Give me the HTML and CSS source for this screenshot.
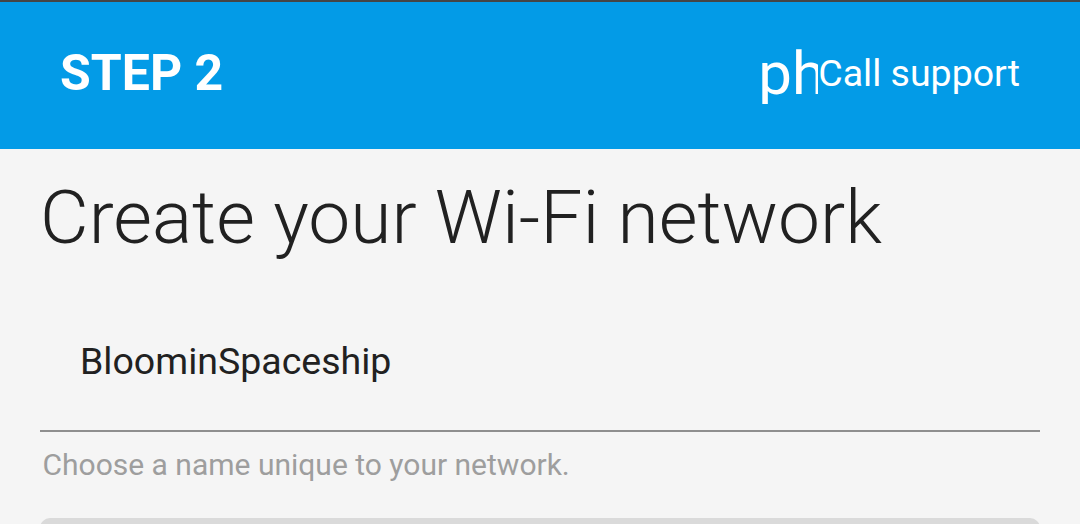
FILE: index.html
```html
<!DOCTYPE html>
<html lang="en">
<head>
<meta charset="utf-8">
<title>Create your Wi-Fi network</title>
<link rel="stylesheet" href="styles.css">
</head>
<body>
<header class="app-bar">
  <div class="step">STEP 2</div>
  <div class="support"><span class="support-icon">phone</span><span class="support-label">Call support</span></div>
</header>
<main class="content">
  <h1 class="title">Create your Wi-Fi network</h1>
  <div class="field">BloominSpaceship</div>
  <p class="hint">Choose a name unique to your network.</p>
  <div class="button"></div>
</main>
</body>
</html>
```

FILE: styles.css
```css
* { box-sizing: border-box; }
body {
  margin: 0;
  height: 524px;
  overflow: hidden;
  background: #f5f5f5;
  color: #212121;
  font-family: Roboto, sans-serif;
}
.app-bar {
  display: flex;
  justify-content: space-between;
  height: 149px;
  padding: 0 60px;
  border-top: 2px solid #454545;
  background: #039be7;
  color: #fff;
  line-height: 142px;
}
.step { font-size: 50px; font-weight: 700; }
.support { display: flex; font-size: 37.5px; line-height: 143px; }
.support-icon {
  width: 60px;
  height: 60px;
  margin-top: 42px;
  overflow: hidden;
  font-size: 60px;
  line-height: 60px;
}
.support-label { white-space: nowrap; }
.content { height: 375px; padding: 0 40px; overflow: hidden; }
.title {
  margin: 0;
  height: 143px;
  font-size: 74.92px;
  font-weight: 300;
  line-height: 136px;
  white-space: nowrap;
}
.field {
  height: 140px;
  padding-left: 40px;
  border-bottom: 2px solid #8f8f8f;
  font-size: 37.5px;
  line-height: 138px;
}
.hint {
  margin: 0;
  height: 86px;
  padding-left: 2.5px;
  color: #9e9e9e;
  font-size: 30px;
  line-height: 66px;
}
.button { height: 60px; border-radius: 10px; background: #dadada; }
```
